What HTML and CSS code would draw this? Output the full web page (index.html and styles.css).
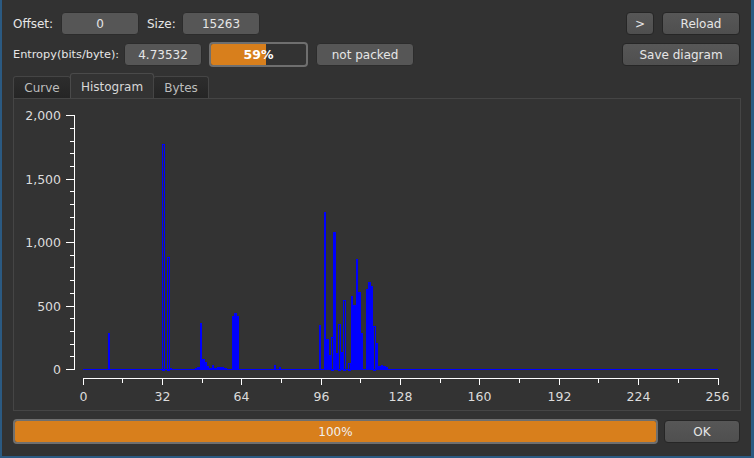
FILE: index.html
```html
<!DOCTYPE html>
<html>
<head>
<meta charset="utf-8">
<link rel="stylesheet" href="styles.css">
</head>
<body>
<div class="window">
  <div class="row row1">
    <span class="label lbl-offset">Offset:</span>
    <span class="field f-offset">0</span>
    <span class="label lbl-size">Size:</span>
    <span class="field f-size">15263</span>
    <span class="spacer"></span>
    <button class="btn btn-next">&gt;</button>
    <button class="btn btn-reload">Reload</button>
  </div>
  <div class="row row2">
    <span class="label lbl-entropy">Entropy(bits/byte):</span>
    <span class="field f-entropy">4.73532</span>
    <div class="pbar pbar-small">
      <div class="pfill" style="width:58%"></div>
      <span class="ptext ptext-bold">59%</span>
    </div>
    <span class="field f-packed">not packed</span>
    <span class="spacer"></span>
    <button class="btn btn-save">Save diagram</button>
  </div>
  <div class="tabs">
    <div class="tab tab-curve">Curve</div>
    <div class="tab tab-hist active">Histogram</div>
    <div class="tab tab-bytes">Bytes</div>
  </div>
  <div class="pane">
    <svg class="plot" width="726" height="311" viewBox="14 99 726 311" xmlns="http://www.w3.org/2000/svg">
      <g class="axis" shape-rendering="crispEdges">
        <path d="M74.5 115 V370 M66 115.5 H75 M66 179.5 H75 M66 242.5 H75 M66 306.5 H75 M66 369.5 H75
                 M70 128.5 H75 M70 141.5 H75 M70 153.5 H75 M70 166.5 H75
                 M70 191.5 H75 M70 204.5 H75 M70 217.5 H75 M70 229.5 H75
                 M70 255.5 H75 M70 267.5 H75 M70 280.5 H75 M70 293.5 H75
                 M70 318.5 H75 M70 331.5 H75 M70 344.5 H75 M70 356.5 H75"/>
        <path d="M83 378.5 H719
                 M83.5 378 V385 M162.5 378 V385 M241.5 378 V385 M321.5 378 V385 M400.5 378 V385
                 M479.5 378 V385 M559.5 378 V385 M638.5 378 V385 M718.5 378 V385
                 M122.5 378 V383 M202.5 378 V383 M281.5 378 V383 M360.5 378 V383
                 M440.5 378 V383 M519.5 378 V383 M598.5 378 V383 M678.5 378 V383"/>
      </g>
      <g class="ylabels">
        <text x="61" y="120">2,000</text>
        <text x="61" y="184">1,500</text>
        <text x="61" y="247">1,000</text>
        <text x="61" y="311">500</text>
        <text x="61" y="374">0</text>
      </g>
      <g class="xlabels">
        <text x="83.5" y="401">0</text>
        <text x="162.5" y="401">32</text>
        <text x="241.5" y="401">64</text>
        <text x="321.5" y="401">96</text>
        <text x="400.5" y="401">128</text>
        <text x="479.5" y="401">160</text>
        <text x="559.5" y="401">192</text>
        <text x="638.5" y="401">224</text>
        <text x="717.5" y="401">256</text>
      </g>
      <line class="baseline" x1="83" y1="369.5" x2="718" y2="369.5" shape-rendering="crispEdges"/>
      <g class="bars" transform="translate(83,370) scale(2.48,-0.1268)" shape-rendering="crispEdges">
        <rect class="f" x="10" y="0" width="1" height="290"/>
        <rect class="h" x="32.2" y="0" width="0.8" height="1780"/>
        <rect class="h" x="34.2" y="0" width="0.8" height="891"/>
        <rect class="f" x="35" y="0" width="1" height="12"/>
        <rect class="f" x="39" y="0" width="1" height="10"/>
        <rect class="f" x="45" y="0" width="1" height="15"/>
        <rect class="f" x="46" y="0" width="1" height="25"/>
        <rect class="f" x="47" y="0" width="1" height="371"/>
        <rect class="f" x="48" y="0" width="1" height="87"/>
        <rect class="f" x="49" y="0" width="1" height="63"/>
        <rect class="f" x="50" y="0" width="1" height="29"/>
        <rect class="f" x="51" y="0" width="1" height="16"/>
        <rect class="f" x="52" y="0" width="1" height="40"/>
        <rect class="f" x="53" y="0" width="1" height="16"/>
        <rect class="f" x="54" y="0" width="1" height="24"/>
        <rect class="f" x="55" y="0" width="1" height="24"/>
        <rect class="f" x="56" y="0" width="1" height="24"/>
        <rect class="f" x="57" y="0" width="1" height="16"/>
        <rect class="f" x="58" y="0" width="1" height="8"/>
        <rect class="f" x="60" y="0" width="1" height="423"/>
        <rect class="f" x="61" y="0" width="1" height="450"/>
        <rect class="f" x="62" y="0" width="1" height="423"/>
        <rect class="f" x="66" y="0" width="1" height="10"/>
        <rect class="f" x="68" y="0" width="1" height="10"/>
        <rect class="f" x="76" y="0" width="1" height="10"/>
        <rect class="f" x="77" y="0" width="1" height="40"/>
        <rect class="f" x="78" y="0" width="1" height="8"/>
        <rect class="f" x="79" y="0" width="1" height="24"/>
        <rect class="f" x="83" y="0" width="1" height="10"/>
        <rect class="f" x="85" y="0" width="1" height="10"/>
        <rect class="f" x="95" y="0" width="1" height="355"/>
        <rect class="f" x="97" y="0" width="1" height="1243"/>
        <rect class="f" x="98" y="0" width="1" height="244"/>
        <rect class="f" x="99" y="0" width="1" height="121"/>
        <rect class="h" x="100.2" y="0" width="0.8" height="260"/>
        <rect class="f" x="101" y="0" width="1" height="1085"/>
        <rect class="f" x="102" y="0" width="1" height="136"/>
        <rect class="h" x="103.2" y="0" width="0.8" height="360"/>
        <rect class="f" x="104" y="0" width="1" height="139"/>
        <rect class="h" x="105.2" y="0" width="0.8" height="549"/>
        <rect class="h" x="107.2" y="0" width="0.8" height="55"/>
        <rect class="f" x="108" y="0" width="1" height="581"/>
        <rect class="f" x="109" y="0" width="1" height="512"/>
        <rect class="f" x="110" y="0" width="1" height="875"/>
        <rect class="f" x="111" y="0" width="1" height="612"/>
        <rect class="f" x="112" y="0" width="1" height="291"/>
        <rect class="f" x="114" y="0" width="1" height="639"/>
        <rect class="f" x="115" y="0" width="1" height="691"/>
        <rect class="f" x="116" y="0" width="1" height="665"/>
        <rect class="h" x="117.2" y="0" width="0.8" height="344"/>
        <rect class="f" x="118" y="0" width="1" height="213"/>
        <rect class="f" x="119" y="0" width="1" height="29"/>
        <rect class="f" x="120" y="0" width="1" height="40"/>
        <rect class="f" x="121" y="0" width="1" height="34"/>
        <rect class="f" x="122" y="0" width="1" height="24"/>
      </g>
    </svg>
  </div>
  <div class="row bottom">
    <div class="pbar pbar-big">
      <div class="pfill" style="width:100%"></div>
      <span class="ptext">100%</span>
    </div>
    <button class="btn btn-ok">OK</button>
  </div>
</div>
</body>
</html>
```

FILE: styles.css
```css
html, body {
  margin: 0;
  padding: 0;
  background: #323232;
}

.window {
  width: 754px;
  height: 458px;
  box-sizing: border-box;
  background: #323232;
  border-left: 2px solid #2b5a82;
  border-right: 3px solid #2b5a82;
  border-bottom: 2px solid #2b5a82;
  padding: 12px 10px 0 11px;
  display: flex;
  flex-direction: column;
  font-family: "DejaVu Sans", sans-serif;
  font-size: 12px;
  color: #e4e4e4;
}

.row {
  display: flex;
  align-items: center;
}

.row1 {
  height: 23px;
}

.row2 {
  height: 25px;
  margin-top: 7px;
}

.spacer {
  flex: 1;
}

.label {
  white-space: nowrap;
  color: #e6e6e6;
}

.lbl-offset { width: 48px; }
.lbl-size { width: 35px; margin-left: 8px; }
.lbl-entropy { width: 111px; font-size: 11.3px; }

.field,
.btn {
  box-sizing: border-box;
  height: 23px;
  display: flex;
  align-items: center;
  justify-content: center;
  border: 1px solid #2c2c2c;
  border-radius: 4px;
  background: #565656;
  color: #e6e6e6;
  font-family: "DejaVu Sans", sans-serif;
  font-size: 12px;
  padding: 0;
  white-space: nowrap;
}

.btn {
  background: linear-gradient(#575757, #4f4f4f);
  border-color: #262626;
}

.f-offset, .f-size, .f-entropy { width: 78px; }
.f-packed { width: 98px; margin-left: 8px; }

.btn-next { width: 28px; }
.btn-reload { width: 78px; margin-left: 8px; margin-right: 1px; }
.btn-save { width: 118px; margin-right: 1px; }
.btn-ok { width: 76px; margin-left: 6px; margin-right: 1px; }

.pbar {
  position: relative;
  box-sizing: border-box;
  height: 25px;
  border: 2px solid #6f6f6f;
  border-radius: 4px;
  background: #333333;
  overflow: hidden;
  display: flex;
  align-items: center;
  justify-content: center;
}

.pbar-small {
  width: 99px;
  margin-left: 7px;
}

.pbar-big {
  width: 645px;
}

.pfill {
  position: absolute;
  left: 0;
  top: 0;
  bottom: 0;
  background: #d87f1c;
}

.ptext {
  position: relative;
  color: #f0f0f0;
}

.ptext-bold {
  font-weight: bold;
  font-size: 12.5px;
  color: #ffffff;
}

.tabs {
  display: flex;
  align-items: flex-end;
  height: 25px;
  margin-top: 6px;
}

.tab {
  box-sizing: border-box;
  height: 22px;
  display: flex;
  align-items: center;
  justify-content: center;
  border: 1px solid #454545;
  border-bottom: none;
  border-radius: 3px 3px 0 0;
  background: linear-gradient(#2d2d2d, #252525);
  color: #bdbdbd;
}

.tab-curve { width: 58px; }
.tab-hist { width: 84px; margin-left: -1px; }
.tab-bytes { width: 56px; margin-left: -1px; }

.tab.active {
  height: 25px;
  background: #333333;
  color: #d8d8d8;
  border-color: #4a4a4a;
  padding-top: 1px;
}

.pane {
  box-sizing: border-box;
  height: 313px;
  border: 1px solid #454545;
  background: #333333;
}

.plot {
  display: block;
}

.axis path {
  stroke: #ffffff;
  stroke-width: 1;
  fill: none;
}

.ylabels text,
.xlabels text {
  font-family: "DejaVu Sans", sans-serif;
  font-size: 12.5px;
  fill: #dcdcdc;
}

.ylabels text {
  text-anchor: end;
}

.xlabels text {
  text-anchor: middle;
}

.baseline {
  stroke: #0000ff;
  stroke-width: 1;
}

.bars .f {
  fill: #0000ff;
}

.bars .h {
  fill: none;
  stroke: #0000ff;
  stroke-width: 1;
  vector-effect: non-scaling-stroke;
}

.bottom {
  height: 25px;
  margin-top: 8px;
}
```
